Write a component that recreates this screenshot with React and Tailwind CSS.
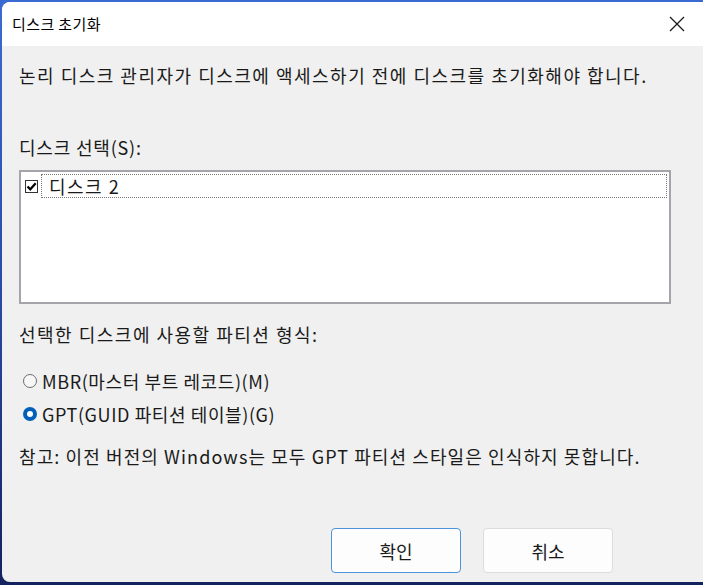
import React from 'react';

const font = "font-['Noto_Sans_CJK_KR','Noto_Sans',sans-serif]";

function Radio({ checked, label }) {
  return (
    <div className="flex items-center h-[24px] pl-[4px]">
      {checked ? (
        <span className="w-[14px] h-[14px] rounded-full bg-[#005fb8] flex items-center justify-center shrink-0">
          <span className="w-[6px] h-[6px] rounded-full bg-white"></span>
        </span>
      ) : (
        <span className="w-[14px] h-[14px] rounded-full border border-[#6e6e6e] bg-[#f7f7f7] shrink-0"></span>
      )}
      <span className="ml-[5px] tracking-[0.6px]">{label}</span>
    </div>
  );
}

export default function App() {
  return (
    <div className={`w-[703px] h-[585px] bg-gradient-to-b from-[#3b6bd2] via-[#2a4aa6] to-[#14225f] pt-[2px] pl-[2px] overflow-hidden ${font} text-[18px] text-[#1a1a1a]`}>
      <div className="w-[708px] h-[580px] rounded-[8px] overflow-hidden bg-[#f0f0f0] flex flex-col">
        {/* Title bar */}
        <div className="h-[44px] bg-white flex items-center justify-between pl-[10px] pr-[17px] shrink-0">
          <span className="text-[15px] leading-[24px] tracking-[0.4px] text-black">디스크 초기화</span>
          <svg width="16" height="16" viewBox="0 0 16 16" className="mr-[8px]">
            <path d="M1 1 L15 15 M15 1 L1 15" stroke="#1a1a1a" strokeWidth="1.3" />
          </svg>
        </div>

        {/* Body */}
        <div className="pl-[17px] pt-[17px] leading-[24px] tracking-[1.5px]">
          <p>논리 디스크 관리자가 디스크에 액세스하기 전에 디스크를 초기화해야 합니다.</p>

          <p className="mt-[48px] tracking-[0.8px]">디스크 선택(S):</p>

          <div className="mt-[11px] w-[652px] h-[134px] bg-white border-2 border-[#a4a5aa] pt-[2px] pl-[4px] pr-[2px]">
            <div className="flex items-center h-[24px]">
              <span className="w-[13px] h-[13px] border border-[#333] bg-white flex items-center justify-center shrink-0">
                <svg width="11" height="11" viewBox="0 0 11 11">
                  <path d="M1.5 5.5 L4.3 8.3 L9.7 2.2" stroke="#000" strokeWidth="2.2" fill="none" />
                </svg>
              </span>
              <div className="ml-[3px] flex-1 h-[24px] border border-dotted border-[#777] flex items-center pl-[7px]">
                <span>디스크 2</span>
              </div>
            </div>
          </div>

          <p className="mt-[18px]">선택한 디스크에 사용할 파티션 형식:</p>

          <div className="mt-[23px]">
            <Radio label="MBR(마스터 부트 레코드)(M)" />
          </div>
          <div className="mt-[9px]">
            <Radio checked label="GPT(GUID 파티션 테이블)(G)" />
          </div>

          <p className="mt-[18px] tracking-[1.1px]">참고: 이전 버전의 Windows는 모두 GPT 파티션 스타일은 인식하지 못합니다.</p>

          <div className="mt-[60px] flex pl-[312px] gap-[22px] tracking-normal">
            <button className="w-[130px] h-[45px] rounded-[4px] bg-[#fdfdfd] border border-[#4d95d8] text-[18px]">확인</button>
            <button className="w-[130px] h-[45px] rounded-[4px] bg-[#fdfdfd] border border-[#dcdcdc] text-[18px]">취소</button>
          </div>
        </div>
      </div>
    </div>
  );
}
